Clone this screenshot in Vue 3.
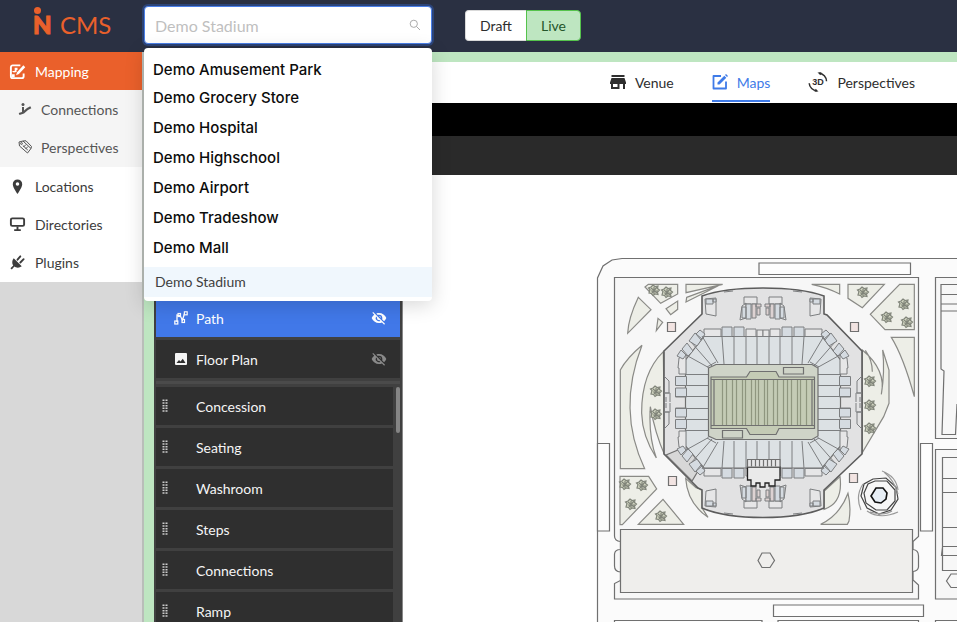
<script setup>
import { ref } from 'vue'

const venues = ['Demo Amusement Park', 'Demo Grocery Store', 'Demo Hospital', 'Demo Highschool', 'Demo Airport', 'Demo Tradeshow', 'Demo Mall']
const layers = ['Concession', 'Seating', 'Washroom', 'Steps', 'Connections', 'Ramp']
const search = ref('')

// The stadium repeats one quarter, mirrored about its two axes
const quarters = ['', 'translate(1526 0) scale(-1 1)', 'translate(0 805) scale(1 -1)', 'translate(1526 805) scale(-1 -1)']
const trees = [[654, 290], [667, 292], [656, 391], [656, 414], [625, 484], [642, 485], [631, 504], [661, 516], [863, 292], [904, 304], [887, 317], [907, 322], [870, 381], [870, 405], [870, 428]]
const stripes = [722, 726, 732, 736, 742, 745, 751, 755, 758, 764, 767, 773, 777, 783, 787, 791, 797, 800, 806]
</script>

<template>
  <div class="app">
    <header class="topbar">
      <a class="brand" href="#"><span class="mark">N</span><span class="brand-name">CMS</span></a>
      <div class="picker">
        <input v-model="search" type="text" placeholder="Demo Stadium" aria-label="Venue" />
        <svg class="magnifier" viewBox="0 0 12 12"><circle cx="4.8" cy="4.8" r="3.6" /><path d="M7.5 7.5L11 11" /></svg>
        <ul class="options">
          <li v-for="v in venues" :key="v">{{ v }}</li>
          <li class="selected">Demo Stadium</li>
        </ul>
      </div>
      <div class="switch">
        <button type="button">Draft</button>
        <button type="button" class="live">Live</button>
      </div>
    </header>

    <div class="body">
      <nav class="sidebar">
        <a href="#" class="item active">
          <svg class="ico" viewBox="0 0 18 18">
            <path d="M12 2.5H4a2 2 0 0 0-2 2V14a2 2 0 0 0 2 2h9.500a2 2 0 0 0 2-2v-3" fill="none" stroke="currentColor" stroke-width="2" />
            <path d="M3 8.500h3V5h3v2.500H8v2l-3 .5zM7.500 13l1-3.300 6.700-7.200 2 1.900-6.700 7.200zM3 12h3v3H3z" />
          </svg>Mapping
        </a>
        <div class="sub">
          <a href="#" class="item">
            <svg class="ico small" viewBox="0 0 14 14"><circle cx="5" cy="2.500" r="1.500" /><path d="M4 5h2v3.500L9 6l3.300-1.700 1 2L10 8 6 11.600 1.500 13l-.8-2L4 10z" /></svg>Connections
          </a>
          <a href="#" class="item">
            <svg class="ico small line" viewBox="0 0 14 14"><path d="M1 2l4-1 8 7.500-3.500 4.500L1.500 6zM5 1l3-.2 5.500 5.700-.5 2" /><circle cx="3.500" cy="3.500" r=".9" /><path d="M5.500 7L8 4.500M7.500 9L10 6.500M4.800 5.500l5 4.600" /></svg>Perspectives
          </a>
        </div>
        <a href="#" class="item">
          <svg class="ico" viewBox="0 0 18 18"><path fill-rule="evenodd" d="M9 1.500a5 5 0 0 0-5 5C4 10 9 16.800 9 16.800S14 10 14 6.500a5 5 0 0 0-5-5zm0 3a1.900 1.900 0 1 1 0 3.800 1.900 1.900 0 0 1 0-3.800z" /></svg>Locations
        </a>
        <a href="#" class="item">
          <svg class="ico" viewBox="0 0 18 18"><rect x="2" y="2.500" width="14" height="8" rx="1.500" fill="none" stroke="currentColor" stroke-width="2" /><path d="M8 11h2v3h2.500v2h-7v-2H8z" /></svg>Directories
        </a>
        <a href="#" class="item">
          <svg class="ico" viewBox="0 0 18 18"><path d="M5 4.500l8.500 8.500c-2.500 2-6 1.800-7.800.2L3 16.500 1.500 15l3-2.800C3 10.200 3 7 5 4.500z" /><path d="M9 6l3-3.500M12 9l3.500-3.500" stroke="currentColor" stroke-width="2" stroke-linecap="round" /></svg>Plugins
        </a>
      </nav>

      <main class="workspace">
        <div class="tabs">
          <a href="#">
            <svg class="tab-ico" viewBox="0 0 16 16"><path d="M1.500 1h13v2h-13zM1.500 4h13L16 8.500V10h-1v5h-2v-5H9.500v5h-8.500v-5H0V8.500zM3 10v3h4.500v-3z" fill-rule="evenodd" /></svg>Venue
          </a>
          <a href="#" class="current">
            <svg class="tab-ico" viewBox="0 0 16 16"><path d="M9 2H1.500v12.500H14V7.500" fill="none" stroke="currentColor" stroke-width="1.800" stroke-linejoin="round" /><path d="M5.500 8.500l6.800-6.800 2 2-6.800 6.800h-2zM13 1l1-1 2 2-1 1z" /></svg>Maps
          </a>
          <a href="#">
            <svg class="tab-ico wide" viewBox="0 0 20 20"><path d="M11 1.200a8 8 0 0 1 7.500 8M9 18.800a8 8 0 0 1-7.800-7.500" fill="none" stroke="currentColor" stroke-width="1.500" /><path d="M9.500.5l4-.3-1 3zM10.500 19.600l-4 .2 1.200-3z" /><text x="10" y="13.300" text-anchor="middle">3D</text></svg>Perspectives
          </a>
        </div>
        <div class="strip"></div>
        <div class="toolbar"></div>
        <div class="editor">
          <aside class="panel">
            <div class="tools"></div>
            <div class="row path">
              <svg class="row-ico" viewBox="0 0 14 14"><path d="M3 11V4l3 .5L8.500 9l2-6.500" fill="none" stroke="currentColor" stroke-width="1.300" /><g fill="none" stroke="currentColor" stroke-width="1.200"><rect x=".8" y="10" width="3" height="3" /><rect x="4" y="2.500" width="2.500" height="3" /><rect x="8" y="8.500" width="2.500" height="3" /><rect x="10.400" y=".8" width="2.800" height="3" /></g></svg>
              <span>Path</span>
              <button type="button" class="eye" aria-label="Toggle path">
                <svg viewBox="0 0 24 24"><path d="M12 7a5 5 0 0 1 5 5c0 .65-.13 1.260-.36 1.830l2.920 2.920A11.800 11.800 0 0 0 23 12c-1.730-4.390-6-7.500-11-7.500-1.400 0-2.740.25-3.980.7l2.160 2.160C10.740 7.130 11.350 7 12 7zM2 4.270l2.280 2.280.46.46A11.800 11.800 0 0 0 1 12c1.730 4.390 6 7.500 11 7.500 1.550 0 3.030-.3 4.380-.84l.42.42L19.730 22 21 20.730 3.270 3zM7.530 9.800l1.550 1.550c-.05.21-.08.43-.08.65a3 3 0 0 0 3.650 2.920l1.550 1.550A5 5 0 0 1 7.530 9.800zm4.310-.78l3.150 3.150.02-.16a3 3 0 0 0-3-3z" /></svg>
              </button>
            </div>
            <div class="row">
              <svg class="row-ico" viewBox="0 0 14 14"><path fill-rule="evenodd" d="M2 1h10a1 1 0 0 1 1 1v10a1 1 0 0 1-1 1H2a1 1 0 0 1-1-1V2a1 1 0 0 1 1-1zm.5 10h9L8.800 6.800 6.500 9.500 5 8z" /></svg>
              <span>Floor Plan</span>
              <button type="button" class="eye dim" aria-label="Toggle floor plan">
                <svg viewBox="0 0 24 24"><path d="M12 7a5 5 0 0 1 5 5c0 .65-.13 1.260-.36 1.830l2.920 2.920A11.800 11.800 0 0 0 23 12c-1.730-4.390-6-7.500-11-7.500-1.400 0-2.740.25-3.980.7l2.160 2.160C10.740 7.130 11.350 7 12 7zM2 4.270l2.280 2.280.46.46A11.800 11.800 0 0 0 1 12c1.730 4.390 6 7.500 11 7.500 1.550 0 3.030-.3 4.380-.84l.42.42L19.730 22 21 20.730 3.270 3zM7.530 9.800l1.550 1.550c-.05.21-.08.43-.08.65a3 3 0 0 0 3.650 2.920l1.550 1.550A5 5 0 0 1 7.530 9.800zm4.310-.78l3.150 3.150.02-.16a3 3 0 0 0-3-3z" /></svg>
              </button>
            </div>
            <div class="scroller">
              <ul class="layers">
                <li v-for="l in layers" :key="l" class="row">
                  <svg class="grip" viewBox="0 0 6 14"><path d="M1.500 .5v14M4.500 .5v14" /></svg>
                  <span>{{ l }}</span>
                </li>
              </ul>
              <div class="thumb"></div>
            </div>
          </aside>

          <svg class="map" viewBox="403 175 554 447" preserveAspectRatio="xMinYMin slice">
            <!-- streets and blocks -->
            <path class="ground" d="M597.500 640V278L603 266L612 260L622 258.500H980V640Z" />
            <path class="block" d="M614.500 277.500H918.500V536.500L913 541.500V549.500Q918.500 550 918.500 556V567Q918 571 913 571.500V580L918.500 585V599H614.500V583.500L620.500 580.500V572Q614.500 571.500 614.500 566V554Q615 549.500 620.500 549.500V541.500Q614.500 541 614.500 536Z" />
            <path class="block" d="M935.500 277.500H980V438.500H935.500ZM935.500 449.500H980V599H935.500Z" />
            <path class="line" d="M957 284.500H941V369L944 371L942 434.500H955.500L957 404M941 294.500H957M941 304H957M941 311H957M957 457.500H942.500V570.500H957M942.500 478.500H957M942.500 492.500H957M942.500 527.500H957M942.500 546.500H957M942.500 547L941.500 555.500H957M957 574H951L946.500 581L951 587.500H957" />
            <path class="road" d="M759 263H910.500V274.500H759ZM597.500 443.500H609.500V531H597.500ZM920.500 443.500H932.500V531H920.500ZM773.500 605H923.500V616.500H773.500ZM614.500 640V620.500H762V640M778 640V620.500H918.500V640M935.500 640V620.500H957" />
            <path class="plaza" d="M620.500 529.500H912.500V592.500H620.500Z" />
            <path class="line" d="M758 560.500L762 553H770L774.500 560.500L770 567.500H762Z" />

            <!-- lawns -->
            <g class="lawn" stroke-width="3.600">
              <g transform="translate(590 250) scale(.33333)">
                <path d="M165 111L175 103H263V132L212 160ZM288 103H398L288 128ZM290 142L385 107L288 156ZM228 176L263 153V178L242 194ZM204 205L218 217L199 242ZM145 142L183 179L113 250Q115 205 145 142ZM156 286Q80 480 164 656H91V360Q110 325 156 286Z" />
                <path d="M220 305Q154 370 155 490Q157 560 199 624Q175 560 181 470Q195 550 224 615ZM287 685Q292 760 354 802L337 775V718L318 713Z" />
                <path d="M90 679H176L200 717L97 824H90ZM219 748L281 823H145Z" />
              </g>
              <g transform="translate(770 250) scale(.33333)">
                <path d="M125 103H209V132Q170 112 125 103ZM234 103H343L277 173L234 145ZM389 103H433V239H345L301 193ZM364 262H433V440Q400 320 364 262ZM338 300L357 360V460L341 500L277 608V300Q350 360 334 433Q345 365 338 300ZM286 301Q307 330 307 365" />
                <path d="M210 680Q220 760 162 778V724ZM234 730Q244 770 237 813L232 823H152Q210 795 234 730Z" />
              </g>
            </g>
            <g v-for="(t, i) in trees" :key="i" class="tree" :transform="`translate(${t[0]} ${t[1]})`">
              <path d="M-1-5L1-3.500L4-4L3.500-1.500L5.500 0L3.500 2L4 4.500L1 4L-1 5.500L-2.500 3.500L-5 3L-4-.5L-5.500-2L-3-3Z" /><path d="M-3-2L3 3M3-3L-2 3M0-3V4M-3 1H4" />
            </g>
            <path class="kiosk" d="M667.500 322.500h8v9h-8zM850.500 322.500h8v9h-8zM668.500 476.500h8v9h-8zM849.500 473.500h8v9h-8z" />

            <!-- stadium shell -->
            <path class="shell" d="M702 296Q724 288 763 288Q802 288 824 296V314L827 315L862 351V454L824 490V508Q802 517.500 763 517.500Q724 517.500 702 508V490L698 488L664 454V351L702 314Z" />
            <path class="shade" d="M666 455L709 437L716 441L692 481Z" />
            <path class="seats" d="M704 336.500H822L840.500 360V446L822 468H704L685.500 446V360Z" />
            <g v-for="(q, i) in quarters" :key="q + i" :transform="q" class="part">
              <path class="room" d="M705 299L716 298V316L706 314Z" /><path class="blue" d="M706 299h7v5h-7zM713 299h3v3h-3z" />
              <path class="room" d="M744 297h13v7h-13zM742 306l4-3v15l-6 2z" /><path class="blue" d="M746 304h5v15h-5zM742 307h4v11h-4z" />
              <path class="rose" d="M752 304h4v14h-4zM756 304h5v3h-5zM757 308h3v7h-3z" />
              <path class="line" d="M664 376l5 5v12h-5M665 393h5v9M666 397v5M724 292l9-1" />
              <path class="room" d="M704 329H721V336.500H704ZM746 329h10v7.500h-10zM757 330h6v6.500h-6zM679 358l7-3v19h-7v-6h-1z" />
              <path class="blue" d="M722 327h10v9.500h-10zM734 327h10v9.500h-10zM675.500 376.500h11v9h-11zM675.500 388h11v9h-11z" />
              <path class="blue" d="M689 341l6-8 7 6-5 7zM682 349l5-6 6 8-5 5zM696 334l4-4 5 4-4 6zM677 356l4-6 5 5-3 4z" />
              <path class="line" d="M702 336L718 363M691 342L712 366M686 355L708.500 367.500M722 336.500L724 364M734 336.500V364M746 336.500V364M757 336.500V364M685.500 374.500H708M685.500 385.500H708M675 396.500H708M707 367L716 362" />
            </g>
            <path class="field" d="M708.500 368L716 364.500H812L818 368V436L812 439.500H716L708.500 436Z" />
            <path class="turf" d="M711 377H746.500L750 371.500H776L779 377H814.500V428.500H779L776 434.500H750L746.500 428.500H711Z" />
            <path class="line" d="M711 379.500H814.500M714 379.500V425M812 379.500V425M711 425.500H814.500M783.500 367.500h20v6.500h-20zM722.500 430.500h20v7.500h-20z" />
            <path v-for="x in stripes" :key="x" class="stripe" :d="`M${x}.5 380V425`" />
            <path class="stage" d="M747.500 467H780V480H775V486H769V483H765V487H760V483H756V486H751V480H747.500Z" />
            <path class="room" d="M747.500 459.500H780V467H747.500Z" />
            <path class="line" d="M751.500 459.500v7M755.500 459.500v7M759.500 459.500v7M763.500 459.500v7M767.500 459.500v7M771.500 459.500v7M775.500 459.500v7" />

            <!-- fountain -->
            <g class="fountain">
              <path d="M873 479L886 478L896 487L898 499L891 510L879 514L867 508L861 496L864 484Z" /><path d="M875 481L887 481L895 490L895 501L887 510L876 510L866 503L864 493L868 484Z" />
              <path class="pool" d="M876 488L883 488L887 493L886 499L881 503L875 502L871 496Z" />
              <path class="swirl" d="M882 471Q896 476 898 490M884 472Q894 480 898 494M863 484Q855 496 861 510M867 511Q880 520 898 512M870 512Q884 516 892 511" />
            </g>
          </svg>
        </div>
      </main>
    </div>
  </div>
</template>

<style>
body { margin: 0; overflow: hidden; }
</style>

<style scoped>
* { box-sizing: border-box; }
.app { display: flex; flex-direction: column; height: 100vh; font-family: Lato, "Open Sans", sans-serif; font-size: 14px; color: #2e2e2e; background: #fff; }
a { color: inherit; text-decoration: none; }
button, input { font: inherit; color: inherit; }
ul { list-style: none; margin: 0; padding: 0; }
svg { display: block; fill: currentColor; flex: none; }

.topbar { display: flex; flex: none; height: 52px; padding-top: 6px; background: #2a3042; }
.brand { display: flex; width: 144px; padding-left: 33px; color: #ea602b; line-height: 38px; }
.mark { position: relative; width: 27px; font-size: 24px; font-weight: 900; -webkit-text-stroke: 1px #ea602b; }
.mark::before { content: ""; position: absolute; left: 1px; top: 1px; width: 7px; height: 7px; border-radius: 50%; background: #ea602b; }
.brand-name { font-size: 24px; }

.picker { position: relative; width: 288px; height: 38px; }
.picker input { width: 100%; height: 100%; padding: 0 30px 0 10px; border: 1px solid #4a7fe8; border-radius: 4px; outline: none; background: #fff; font-size: 16px; box-shadow: 0 0 0 2px #2c4478; }
.picker input::placeholder { color: #bfbfbf; opacity: 1; }
.magnifier { position: absolute; right: 11px; top: 13px; width: 12px; height: 12px; fill: none; stroke: #aaa; }
.options { position: absolute; z-index: 5; top: 42px; left: 0; right: 0; padding: 5px 0 4px; border-radius: 4px; background: #fff; box-shadow: 0 4px 20px rgba(0, 0, 0, .16); font-family: Inter, sans-serif; font-size: 15px; font-weight: 500; color: #0c0c0c; }
.options li { height: 30px; padding-left: 9px; line-height: 30px; }
.options li:first-child { padding-top: 4px; line-height: 26px; }
.options .selected { margin-top: 4px; padding-left: 11px; background: #f0f7fd; font-family: Lato, sans-serif; font-size: 14px; font-weight: 400; color: #404040; }

.switch { display: flex; height: 31px; margin: 4px 0 0 33px; }
.switch button { width: 61px; padding: 0; border: 1px solid #d9d9d9; border-right: 0; border-radius: 4px 0 0 4px; background: #fff; font-size: 14px; }
.switch .live { width: 55px; border: 1px solid #55c34c; border-radius: 0 4px 4px 0; background: #bee6c1; color: #24552a; }

.body { display: flex; flex: 1; min-height: 0; }
.sidebar { width: 142px; flex: none; background: #d8d8d8; }
.item { display: flex; align-items: center; height: 38px; padding-left: 9px; gap: 9px; background: #fff; color: #3c3c3c; }
.item.active { background: #ea602b; color: #fff; }
.sub { padding-bottom: 1px; background: #f5f5f5; }
.sub .item { padding-left: 18px; background: none; color: #555; }
.sidebar > .item:last-child { height: 39px; }
.ico { width: 17px; height: 17px; }
.ico.small { width: 14px; height: 14px; }
.ico.line { fill: none; stroke: currentColor; }

.workspace { display: flex; flex: 1; flex-direction: column; min-width: 0; padding: 10px 0 0 10px; border-left: 2px solid #b9beb9; background: #bee6c1; }
.tabs { display: flex; flex: none; justify-content: flex-end; height: 41px; padding-right: 42px; gap: 38px; background: #fff; }
.tabs a { display: flex; align-items: center; height: 40px; gap: 9px; border-bottom: 2px solid transparent; padding-top: 2px; }
.tabs .current { border-color: #3f7be8; color: #3f7be8; }
.tab-ico { width: 16px; height: 16px; }
.tab-ico.wide { width: 20px; height: 20px; }
.tab-ico text { font: bold 9px "Liberation Sans", sans-serif; }
.strip { flex: none; height: 33px; background: #000; }
.toolbar { flex: none; height: 39px; background: #2a2a2a; }
.editor { display: flex; flex: 1; min-height: 0; background: #fff; }

.panel { display: flex; flex: none; flex-direction: column; width: 249px; padding: 0 2px; border-right: 1px solid #888; background: #404040; color: #f5f5f5; }
.tools { flex: none; height: 124px; }
.row { display: flex; flex: none; align-items: center; height: 38px; margin-bottom: 3px; background: #2f2f2f; }
.row.path { background: #4178e8; color: #fff; }
.row-ico { width: 14px; height: 14px; margin: 0 8px 0 18px; }
.eye { margin-left: auto; padding: 0 13px; border: 0; background: none; color: #fff; }
.eye svg { width: 16px; height: 16px; }
.eye.dim { color: #8a8a8a; }
.scroller { display: flex; flex: 1; min-height: 0; padding-top: 3px; border-top: 3px solid #4b4b4b; overflow: hidden; justify-content: space-between; }
.layers { flex: 1; }
.grip { width: 6px; height: 14px; margin: 0 28px 0 6px; fill: none; stroke: #ccc; stroke-width: 2; stroke-dasharray: 1.5 1.2; }
.thumb { flex: none; width: 4px; height: 46px; margin-left: 3px; border-radius: 2px; background: #858585; }

.map { flex: 1; min-width: 0; height: 100%; fill: none; stroke: #707070; stroke-width: 1.2; }
.ground { fill: #fbfbfb; }
.block { fill: #f7f7f7; }
.road { fill: #fdfdfd; }
.plaza { fill: #efeeec; }
.line { fill: none; }
.lawn { fill: #edeee7; stroke: #8a8a86; }
.tree { fill: #d2d6c2; stroke: #81857a; }
.kiosk { fill: #f2e4e2; }
.shell { fill: #e2e2e3; stroke: #5c5c5c; stroke-width: 1.6; }
.shade { fill: #d7d7d7; }
.seats { fill: #dce1e4; }
.room { fill: #e6e6e7; }
.blue { fill: #d5dbe1; }
.rose { fill: #ddd2d2; }
.part { stroke: #7c7e80; stroke-width: 1; }
.field { fill: #cfd4c8; }
.turf { fill: #c4cbb5; }
.stripe { stroke: #8f967f; }
.stage { fill: #eaeaea; stroke: #222; stroke-width: 1.3; }
.fountain { fill: none; stroke: #444; stroke-width: 1.2; }
.pool { fill: #e7eef5; stroke: #111; stroke-width: 1.6; }
.swirl { stroke: #999; }
</style>
